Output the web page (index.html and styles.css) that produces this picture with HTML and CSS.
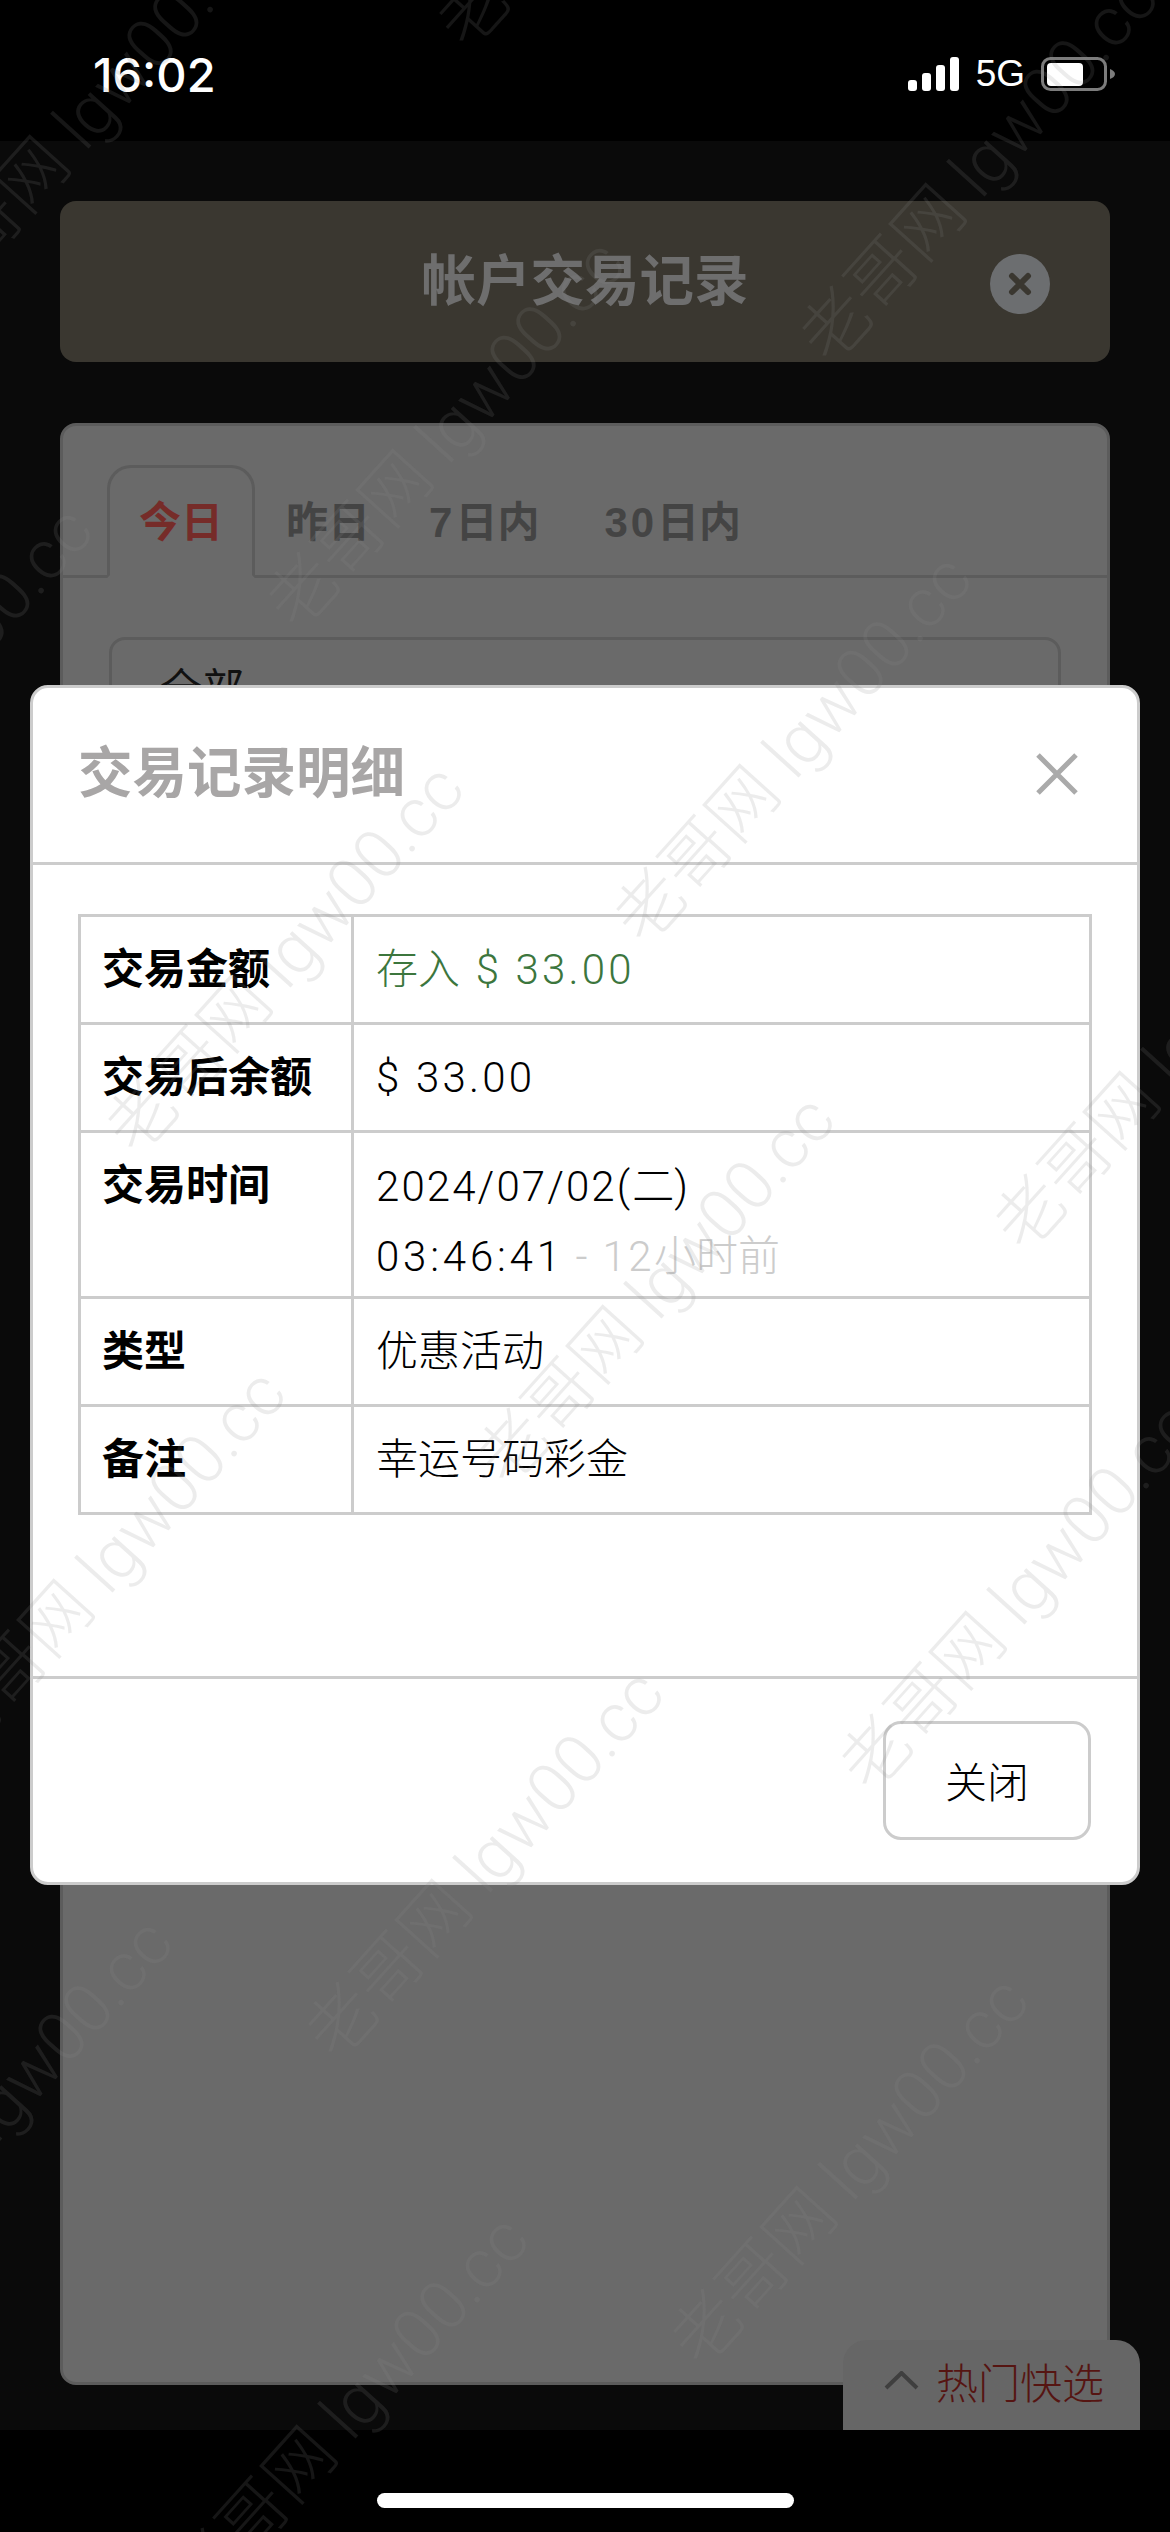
FILE: index.html
```html
<!DOCTYPE html>
<html lang="zh-CN">
<head>
<meta charset="utf-8">
<title>交易记录明细</title>
<link rel="stylesheet" href="styles.css">
</head>
<body>
<div class="phone">
  <div class="status">
    <span class="time">16:02</span>
    <div class="status-right">
      <svg class="signal" width="51" height="34" viewBox="0 0 51 34"><rect x="0" y="23" width="9" height="11" rx="3"/><rect x="14" y="16" width="9" height="18" rx="3"/><rect x="28" y="8" width="9" height="26" rx="3"/><rect x="42" y="0" width="9" height="34" rx="3"/></svg>
      <span class="net">5G</span>
      <svg class="battery" width="74" height="34" viewBox="0 0 74 34"><rect x="1.5" y="1.5" width="63" height="31" rx="8" fill="none" stroke="#7c7c7c" stroke-width="3"/><rect x="6" y="6" width="36" height="23" rx="4" fill="#fff"/><path d="M69 12c3 1 5 3 5 5s-2 4-5 5z" fill="#7c7c7c"/></svg>
    </div>
  </div>
  <main class="page">
    <header class="banner">
      <h1 class="banner-title">帐户交易记录</h1>
      <span class="banner-close"><svg width="24" height="24" viewBox="0 0 24 24"><path d="M4 4L20 20M20 4L4 20" stroke="#3a3730" stroke-width="6" stroke-linecap="round"/></svg></span>
    </header>
    <section class="card">
      <nav class="tabs">
        <span class="tab active">今日</span>
        <span class="tab">昨日</span>
        <span class="tab"><span class="tab-num">7</span>日内</span>
        <span class="tab"><span class="tab-num">30</span>日内</span>
      </nav>
      <div class="select">全部</div>
    </section>
  </main>
  <div class="bottom"><span class="home"></span></div>

  <aside class="hot">
    <svg width="35" height="19" viewBox="0 0 35 19"><path d="M2 17L17.500 2L33 17" fill="none" stroke="#3f3f3f" stroke-width="4"/></svg>
    <span class="hot-text">热门快选</span>
  </aside>

  <div class="modal">
    <div class="modal-head">
      <h2 class="modal-title">交易记录明细</h2>
      <svg class="modal-x" width="42" height="42" viewBox="0 0 42 42"><path d="M2 2L40 40M40 2L2 40" stroke="#aaa" stroke-width="5"/></svg>
    </div>
    <div class="modal-body">
      <table class="detail">
        <tr><th>交易金额</th><td class="green">存入 <span class="num money offset">$ 33.00</span></td></tr>
        <tr><th>交易后余额</th><td><span class="num money">$ 33.00</span></td></tr>
        <tr class="tall"><th>交易时间</th><td><span class="num date">2024/07/02(</span>二<span class="num">)</span><br><span class="num clock">03:46:41</span> <span class="ago"><span class="num">- 12</span>小时前</span></td></tr>
        <tr><th>类型</th><td>优惠活动</td></tr>
        <tr><th>备注</th><td>幸运号码彩金</td></tr>
      </table>
    </div>
    <div class="modal-foot"><span class="btn">关闭</span></div>
  </div>

  <svg class="watermark" width="1170" height="2532" viewBox="0 0 1170 2532">
    <text transform="translate(831 367) rotate(-48)">老哥网 lgw00.cc</text>
    <text transform="translate(645 948) rotate(-48)">老哥网 lgw00.cc</text>
    <text transform="translate(508 1489) rotate(-48)">老哥网 lgw00.cc</text>
    <text transform="translate(337 2063) rotate(-48)">老哥网 lgw00.cc</text>
    <text transform="translate(202 2609) rotate(-48)">老哥网 lgw00.cc</text>
    <text transform="translate(468 52) rotate(-48)">老哥网 lgw00.cc</text>
    <text transform="translate(298 633) rotate(-48)">老哥网 lgw00.cc</text>
    <text transform="translate(137 1158) rotate(-48)">老哥网 lgw00.cc</text>
    <text transform="translate(-41 1763) rotate(-48)">老哥网 lgw00.cc</text>
    <text transform="translate(-154 2312) rotate(-48)">老哥网 lgw00.cc</text>
    <text transform="translate(1025 1255) rotate(-48)">老哥网 lgw00.cc</text>
    <text transform="translate(871 1795) rotate(-48)">老哥网 lgw00.cc</text>
    <text transform="translate(702 2370) rotate(-48)">老哥网 lgw00.cc</text>
    <text transform="translate(565 2924) rotate(-48)">老哥网 lgw00.cc</text>
    <text transform="translate(-65 319) rotate(-48)">老哥网 lgw00.cc</text>
    <text transform="translate(-234 900) rotate(-48)">老哥网 lgw00.cc</text>
  </svg>
</div>
</body>
</html>
```
FILE: styles.css
```css
* { box-sizing: border-box; }
html, body { margin: 0; padding: 0; background: #000; }
body { font-family: "Liberation Sans", "Noto Sans CJK SC", sans-serif; }
.phone { position: relative; width: 1170px; height: 2532px; overflow: hidden; display: flex; flex-direction: column; background: #000; }

.status { height: 141px; flex: none; background: #000; color: #fff; display: flex; justify-content: space-between; align-items: flex-start; padding: 54px 55px 0 93px; }
.time { font-family: Inter, "Liberation Sans", sans-serif; font-size: 47px; line-height: 42px; font-weight: 500; letter-spacing: 0; }
.status-right { display: flex; align-items: center; margin-top: 3px; }
.signal { fill: #fff; display: block; }
.net { font-size: 37px; line-height: 34px; margin: 0 16px 0 17px; }
.battery { display: block; }

.page { flex: 1; background: #0a0a0a; padding: 60px 60px 45px; display: flex; flex-direction: column; gap: 61px; min-height: 0; }
.banner { position: relative; height: 161px; flex: none; background: #3a3730; border-radius: 16px; display: flex; align-items: center; justify-content: center; }
.banner-title { margin: 0; padding-top: 2px; font-size: 54.5px; font-weight: 700; color: #6e6e6e; line-height: 1; }
.banner-close { position: absolute; right: 60px; top: 53px; width: 60px; height: 60px; border-radius: 50%; background: #6c6e70; display: flex; align-items: center; justify-content: center; }

.card { flex: 1; background: #6a6a6a; border: 3px solid #5c5c5c; border-radius: 16px; padding-top: 39px; overflow: hidden; }
.tabs { display: flex; height: 113px; padding-left: 44px; border-bottom: 3px solid #5c5c5c; font-size: 42px; font-weight: 700; color: #444; }
.tab { padding: 28px 27px 0 31px; line-height: 60px; }
.tab:nth-child(3) { padding: 28px 33px 0 32px; }
.tab:nth-child(4) { padding: 28px 0 0 32px; }
.tab-num { letter-spacing: 3px; }
.tab.active { color: #762c29; width: 148px; height: 113px; padding: 25px 0 0; text-align: center; border: 3px solid #5c5c5c; border-bottom: 3px solid #6a6a6a; border-radius: 24px 24px 0 0; }
.select { margin: 59px 46px 0 46px; height: 120px; border: 3px solid #5c5c5c; border-radius: 16px; padding: 20px 48px; font-size: 42px; line-height: 60px; color: #111; }

.bottom { height: 102px; flex: none; background: #000; display: flex; justify-content: center; padding-top: 63px; }
.home { width: 417px; height: 15px; border-radius: 8px; background: #fff; }

.hot { position: absolute; left: 843px; top: 2340px; width: 297px; height: 90px; background: #666; border-radius: 24px 24px 0 0; display: flex; align-items: flex-start; padding: 31px 0 0 41px; gap: 17px; }
.hot-text { font-size: 42px; font-weight: 300; line-height: 30px; color: #561512; margin-top: -1px; }

.modal { position: absolute; left: 30px; top: 685px; width: 1110px; height: 1200px; background: #fff; border: 3px solid #ccc; border-radius: 18px; display: flex; flex-direction: column; }
.modal-head { height: 177px; flex: none; border-bottom: 3px solid #ccc; display: flex; justify-content: space-between; padding: 0 59px 0 45px; align-items: flex-start; }
.modal-title { margin: 0; padding-top: 53px; font-size: 54.5px; line-height: 66px; font-weight: 700; color: #a8a6a6; }
.modal-x { margin-top: 65px; }
.modal-body { height: 814px; flex: none; border-bottom: 3px solid #ccc; padding: 49px 45px 0; }
.detail { width: 1014px; border-collapse: collapse; border: 3px solid #ccc; font-size: 42px; line-height: 69px; color: #000; }
.detail th, .detail td { border: 3px solid #ccc; padding: 18px 22px; vertical-align: top; text-align: left; }
.detail th { width: 273px; font-weight: 700; white-space: nowrap; padding-left: 21px; padding-right: 0; }
.detail td { font-weight: 300; }
.tall td { padding-top: 19px; padding-bottom: 4px; line-height: 70px; }
.num { font-family: Roboto, "Liberation Sans", sans-serif; font-weight: 300; letter-spacing: 2.4px; }
.money { letter-spacing: 3.2px; }
.offset { margin-left: 4px; }
.date { letter-spacing: 2.1px; }
.clock { letter-spacing: 3.8px; }
.green { color: #3c763d; }
.ago { color: #ccc; }
.modal-foot { flex: 1; display: flex; justify-content: flex-end; align-items: flex-start; padding: 42px 46px 0 0; }
.btn { width: 208px; height: 119px; border: 3px solid #ccc; border-radius: 18px; font-size: 42px; font-weight: 300; display: flex; align-items: center; justify-content: center; color: #000; padding-bottom: 2px; }

.watermark { position: absolute; left: 0; top: 0; pointer-events: none; }
.watermark text { font-family: Roboto, "Noto Sans CJK SC", sans-serif; font-size: 69px; font-weight: 300; fill: #888; fill-opacity: 0.16; }
```
